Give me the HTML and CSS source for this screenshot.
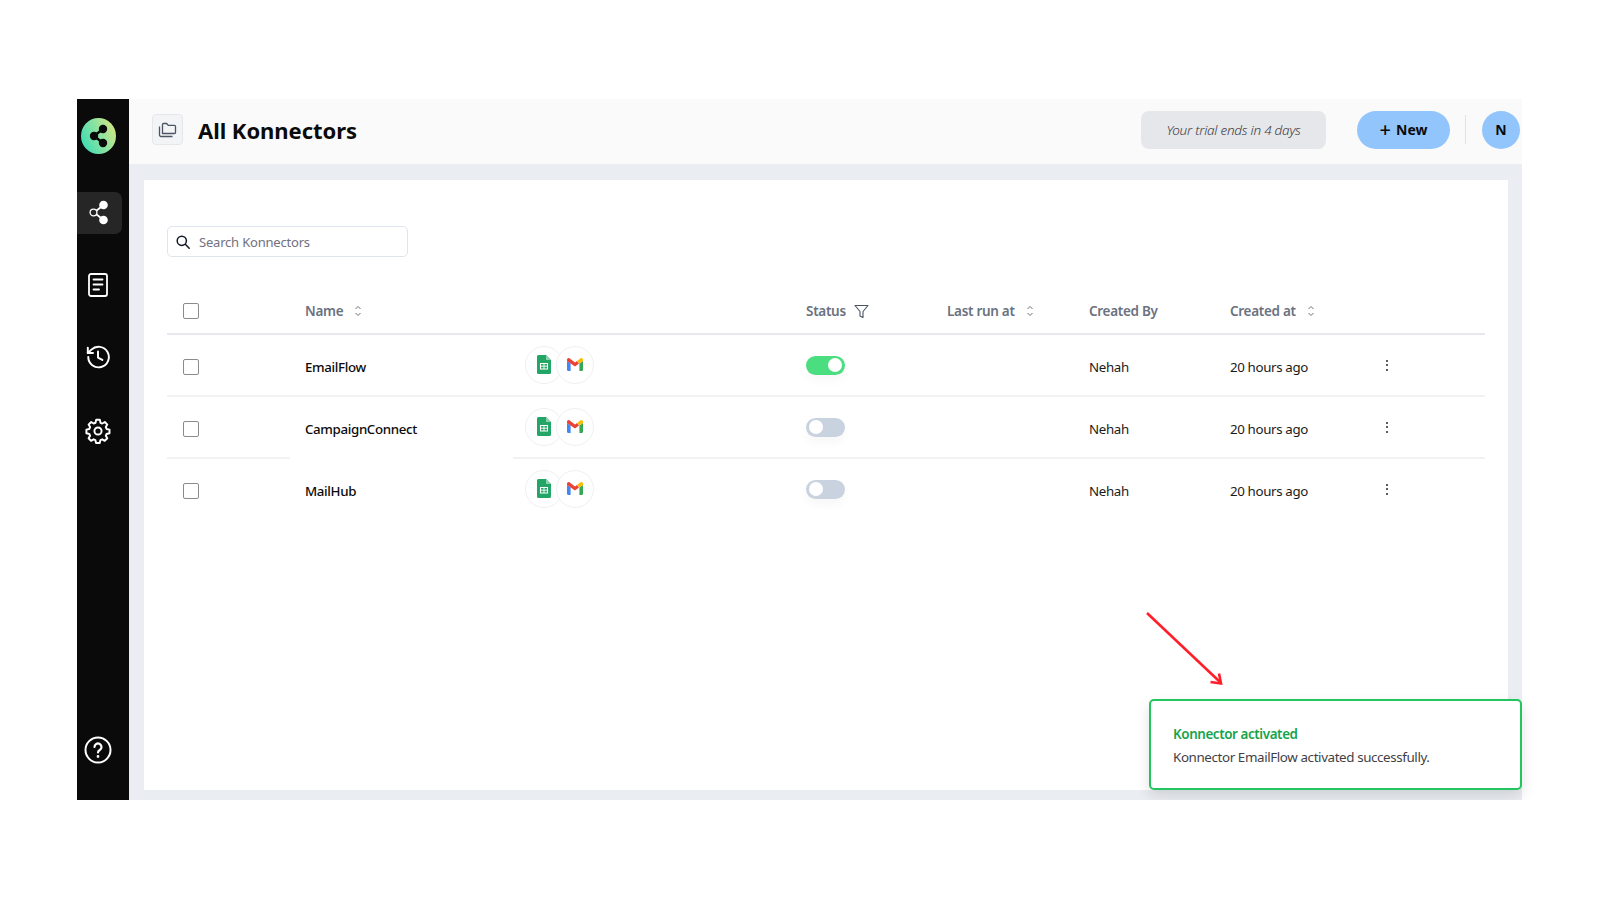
FILE: index.html
```html
<!DOCTYPE html>
<html lang="en">
<head>
<meta charset="utf-8">
<title>All Konnectors</title>
<link rel="stylesheet" href="styles.css">
</head>
<body>
<div class="app">
  <aside class="sidebar">
    <div class="logo">
      <svg width="20" height="24" viewBox="0 0 20 24"><path d="M14 5 5 12l9 7" fill="none" stroke="#0a0a0a" stroke-width="2.6"/><circle cx="14" cy="5" r="4.200" fill="#0a0a0a"/><circle cx="14" cy="19" r="4.200" fill="#0a0a0a"/><circle cx="5" cy="12" r="4.200" fill="#0a0a0a"/></svg>
    </div>
    <div class="nav-item active">
      <svg width="22" height="28" viewBox="0 0 22 28"><path d="M15 6.500 6 13.500l9 7" fill="none" stroke="#fff" stroke-width="1.800"/><circle cx="15.500" cy="6" r="4.300" fill="#fff"/><circle cx="15.500" cy="21" r="4.300" fill="#fff"/><circle cx="5.500" cy="13.500" r="3.400" fill="#262626" stroke="#fff" stroke-width="1.300"/></svg>
    </div>
    <div class="nav-item">
      <svg width="22" height="26" viewBox="0 0 22 26" fill="none" stroke="#fff" stroke-width="1.800" stroke-linecap="round"><rect x="2" y="2" width="18" height="22" rx="2"/><path d="M6.500 7.500h9M6.500 12.500h9M6.500 17.500h5.500"/></svg>
    </div>
    <div class="nav-item">
      <svg width="26" height="26" viewBox="0 0 24 24" fill="none" stroke="#fff" stroke-width="1.800" stroke-linecap="round" stroke-linejoin="round"><path d="M3 12a9.500 9.500 0 1 0 2.900-6.800L2.600 8.300"/><path d="M2.600 3.500v4.800h4.800"/><path d="M12 7v5.500l4 2.200"/></svg>
    </div>
    <div class="nav-item gear">
      <svg width="26" height="26" viewBox="0 0 24 24" fill="none" stroke="#fff" stroke-width="1.800" stroke-linecap="round" stroke-linejoin="round"><path d="M10.300 2.600h3.400l.6 2.700 1.600.7 2.400-1.400 2.300 2.400-1.400 2.300.7 1.700 2.700.6v3.400l-2.700.6-.7 1.700 1.400 2.300-2.400 2.400-2.300-1.400-1.700.7-.6 2.700h-3.400l-.6-2.700-1.600-.7-2.400 1.400-2.300-2.400 1.400-2.300-.7-1.700-2.700-.6v-3.400l2.700-.6.7-1.700-1.400-2.300 2.400-2.400 2.300 1.400 1.700-.7z" transform="translate(0 -.9)"/><circle cx="12" cy="12" r="3.300"/></svg>
    </div>
    <div class="nav-item help">
      <svg width="28" height="28" viewBox="0 0 28 28" fill="none" stroke="#fff" stroke-width="2" stroke-linecap="round"><circle cx="14" cy="14" r="12.500"/><path d="M10.500 11a3.500 3.500 0 1 1 5.300 3c-1.200.8-1.800 1.300-1.800 2.500" stroke-width="2.200"/><circle cx="14" cy="20.500" r=".6" stroke-width="1.600"/></svg>
    </div>
  </aside>
  <div class="content">
    <header class="topbar">
      <div class="folder-btn">
        <svg width="20" height="18" viewBox="0 0 20 18" fill="none" stroke="#4b5563" stroke-width="1.300" stroke-linejoin="round"><path d="M4.500 12.500V3.500a1 1 0 0 1 1-1h3.200l1.500 1.800h6.300a1 1 0 0 1 1 1v6.200a1 1 0 0 1-1 1h-11a1 1 0 0 1-1-1z"/><path d="M1.500 5.500v8.500a1.500 1.500 0 0 0 1.500 1.500h11.500"/></svg>
      </div>
      <h1 class="title">All Konnectors</h1>
      <div class="trial">Your trial ends in 4 days</div>
      <button class="new-btn"><span class="plus">+</span> New</button>
      <span class="vline"></span>
      <div class="avatar">N</div>
    </header>
    <main class="main">
      <section class="card">
        <div class="search">
          <svg width="14" height="14" viewBox="0 0 14 14" fill="none" stroke="#111827" stroke-width="1.500" stroke-linecap="round"><circle cx="5.800" cy="5.800" r="4.600"/><path d="m9.300 9.300 3.900 3.900"/></svg>
          <span>Search Konnectors</span>
        </div>
        <div class="table">
          <div class="row head">
            <span class="check"></span>
            <span class="th">Name <svg class="sort" width="8" height="12" viewBox="0 0 8 12" fill="none" stroke="#6b7280" stroke-width="1"><path d="m1.500 4 2.500-2.500L6.500 4M1.500 8 4 10.500 6.500 8"/></svg></span>
            <span></span>
            <span class="th">Status <svg class="funnel" width="15" height="15" viewBox="0 0 15 15" fill="none" stroke="#4b5563" stroke-width="1.100" stroke-linejoin="round"><path d="M1 1.500h13L9 7.500v6l-3-1.500V7.500z"/></svg></span>
            <span class="th">Last run at <svg class="sort" width="8" height="12" viewBox="0 0 8 12" fill="none" stroke="#6b7280" stroke-width="1"><path d="m1.500 4 2.500-2.500L6.500 4M1.500 8 4 10.500 6.500 8"/></svg></span>
            <span class="th">Created By</span>
            <span class="th">Created at <svg class="sort" width="8" height="12" viewBox="0 0 8 12" fill="none" stroke="#6b7280" stroke-width="1"><path d="m1.500 4 2.500-2.500L6.500 4M1.500 8 4 10.500 6.500 8"/></svg></span>
            <span></span>
          </div>
          <div class="sep strong"></div>
          <div class="row">
            <span class="check"></span>
            <span class="name">EmailFlow</span>
            <span class="apps">
              <span class="app-icon"><svg width="14" height="19" viewBox="0 0 14 19"><path d="M1.500 0H9l5 5v12.500a1.500 1.500 0 0 1-1.500 1.500h-11A1.500 1.500 0 0 1 0 17.500v-16A1.500 1.500 0 0 1 1.500 0z" fill="#23a566"/><path d="M9 0l5 5H9z" fill="#8ed1b1"/><path d="M3.500 8.500h7v5.500h-7z" fill="none" stroke="#fff" stroke-width="1.100"/><path d="M3.500 11.200h7M7 8.500V14" stroke="#fff" stroke-width=".9"/></svg></span>
              <span class="app-icon over"><svg width="16" height="13" viewBox="0 0 16 13"><path d="M0 3v8.800c0 .6.500 1.200 1.200 1.200H3.600V5.500z" fill="#4285f4"/><path d="M16 3v8.800c0 .6-.5 1.200-1.200 1.200h-2.400V5.500z" fill="#34a853"/><path d="M3.600 5.500 0 3V1.800C0 .4 1.600-.4 2.700.4L8 4.400l2-1.500 2 2.600L8 8.500z" fill="#ea4335"/><path d="M12.400 5.500 16 3V1.800c0-1.400-1.600-2.200-2.700-1.400L10 2.900z" fill="#fbbc04"/></svg></span>
            </span>
            <span class="toggle on"><span class="knob"></span></span>
            <span></span>
            <span class="cell">Nehah</span>
            <span class="cell">20 hours ago</span>
            <span class="dots"><i></i><i></i><i></i></span>
          </div>
          <div class="sep"></div>
          <div class="row">
            <span class="check"></span>
            <span class="name">CampaignConnect</span>
            <span class="apps">
              <span class="app-icon"><svg width="14" height="19" viewBox="0 0 14 19"><path d="M1.500 0H9l5 5v12.500a1.500 1.500 0 0 1-1.500 1.500h-11A1.500 1.500 0 0 1 0 17.500v-16A1.500 1.500 0 0 1 1.500 0z" fill="#23a566"/><path d="M9 0l5 5H9z" fill="#8ed1b1"/><path d="M3.500 8.500h7v5.500h-7z" fill="none" stroke="#fff" stroke-width="1.100"/><path d="M3.500 11.200h7M7 8.500V14" stroke="#fff" stroke-width=".9"/></svg></span>
              <span class="app-icon over"><svg width="16" height="13" viewBox="0 0 16 13"><path d="M0 3v8.800c0 .6.500 1.200 1.200 1.200H3.600V5.500z" fill="#4285f4"/><path d="M16 3v8.800c0 .6-.5 1.200-1.200 1.200h-2.400V5.500z" fill="#34a853"/><path d="M3.600 5.500 0 3V1.800C0 .4 1.600-.4 2.700.4L8 4.400l2-1.500 2 2.600L8 8.500z" fill="#ea4335"/><path d="M12.400 5.500 16 3V1.800c0-1.400-1.600-2.200-2.700-1.400L10 2.900z" fill="#fbbc04"/></svg></span>
            </span>
            <span class="toggle"><span class="knob"></span></span>
            <span></span>
            <span class="cell">Nehah</span>
            <span class="cell">20 hours ago</span>
            <span class="dots"><i></i><i></i><i></i></span>
          </div>
          <div class="sep split"></div>
          <div class="row">
            <span class="check"></span>
            <span class="name">MailHub</span>
            <span class="apps">
              <span class="app-icon"><svg width="14" height="19" viewBox="0 0 14 19"><path d="M1.500 0H9l5 5v12.500a1.500 1.500 0 0 1-1.500 1.500h-11A1.500 1.500 0 0 1 0 17.500v-16A1.500 1.500 0 0 1 1.500 0z" fill="#23a566"/><path d="M9 0l5 5H9z" fill="#8ed1b1"/><path d="M3.500 8.500h7v5.500h-7z" fill="none" stroke="#fff" stroke-width="1.100"/><path d="M3.500 11.200h7M7 8.500V14" stroke="#fff" stroke-width=".9"/></svg></span>
              <span class="app-icon over"><svg width="16" height="13" viewBox="0 0 16 13"><path d="M0 3v8.800c0 .6.500 1.200 1.200 1.200H3.600V5.500z" fill="#4285f4"/><path d="M16 3v8.800c0 .6-.5 1.200-1.200 1.200h-2.400V5.500z" fill="#34a853"/><path d="M3.600 5.500 0 3V1.800C0 .4 1.600-.4 2.700.4L8 4.400l2-1.500 2 2.600L8 8.500z" fill="#ea4335"/><path d="M12.400 5.500 16 3V1.800c0-1.400-1.600-2.200-2.700-1.400L10 2.900z" fill="#fbbc04"/></svg></span>
            </span>
            <span class="toggle"><span class="knob"></span></span>
            <span></span>
            <span class="cell">Nehah</span>
            <span class="cell">20 hours ago</span>
            <span class="dots"><i></i><i></i><i></i></span>
          </div>
        </div>
      </section>
    </main>
  </div>
  <svg class="arrow" width="80" height="76" viewBox="0 0 80 76" fill="none" stroke="#ff1f2a" stroke-width="2.600"><path d="M2 2 75 71"/><path d="M65.500 71 76 72.500l-2-10"/></svg>
  <div class="toast">
    <div class="toast-title">Konnector activated</div>
    <div class="toast-body">Konnector EmailFlow activated successfully.</div>
  </div>
</div>
</body>
</html>
```
FILE: styles.css
```css
* { box-sizing: border-box; }
html, body { margin: 0; padding: 0; background: #fff; }
body { font-family: "Noto Sans", "Open Sans", sans-serif; color: #111; padding: 99px 78px 0 77px; }

.app { position: relative; display: flex; height: 701px; width: 1445px; }

.sidebar { width: 52px; flex: none; background: #0a0a0a; display: flex; flex-direction: column; align-items: flex-start; padding-top: 19px; padding-bottom: 29px; }
.logo { width: 35px; height: 36px; margin-left: 4px; margin-bottom: 38px; border-radius: 50%; background: linear-gradient(65deg, #3fdcb4 10%, #8fe3a0 55%, #e3e67a 100%); display: flex; align-items: center; justify-content: center; }
.nav-item { width: 45px; height: 42px; margin-bottom: 30px; display: flex; align-items: center; justify-content: center; padding-right: 3px; }
.nav-item.active { background: #262626; border-radius: 0 7px 7px 0; padding-right: 2px; }
.nav-item.gear { padding-top: 4px; }
.nav-item.help { margin-top: auto; margin-bottom: 0; }

.content { flex: 1; min-width: 0; display: flex; flex-direction: column; }
.topbar { height: 65px; flex: none; background: #fafafa; display: flex; align-items: center; padding: 0 2px 4px 23px; }
.folder-btn { width: 31px; height: 31px; background: #f3f4f6; border: 1px solid #e5e7eb; border-radius: 4px; display: flex; align-items: center; justify-content: center; margin-right: 15px; }
.title { margin: 0; font-size: 22px; line-height: 30px; font-weight: 700; color: #0b0b0b; letter-spacing: -.05px; }
.trial { margin-left: auto; width: 185px; height: 38px; background: #e6e7ea; border-radius: 8px; display: flex; align-items: center; justify-content: center; font-size: 13.500px; font-style: italic; font-weight: 300; color: #3a3a44; letter-spacing: -.25px; }
.new-btn { margin-left: 31px; width: 93px; height: 38px; border: 0; border-radius: 19px; background: #93c5fd; font: 700 14px "Noto Sans", "Open Sans", sans-serif; color: #0b0b0b; display: flex; align-items: center; justify-content: center; gap: 5px; }
.plus { font-size: 20px; font-weight: 500; line-height: 20px; }
.vline { width: 1px; height: 29px; margin: 0 16px 0 15px; background: #e1e2e4; }
.avatar { width: 38px; height: 38px; border-radius: 50%; background: #93c5fd; display: flex; align-items: center; justify-content: center; font-size: 14px; font-weight: 700; color: #0b0b0b; }

.main { flex: 1; min-height: 0; background: #eaedf2; padding: 16px 14px 10px 15px; }
.card { height: 100%; background: #fff; padding: 46px 23px 0; }
.search { width: 241px; height: 31px; border: 1px solid #dfe5ee; border-radius: 5px; display: flex; align-items: center; gap: 9px; padding-left: 8px; font-size: 13px; color: #71717f; letter-spacing: -.2px; }

.table { margin-top: 30px; }
.row { display: grid; grid-template-columns: 138px 220px 281px 141px 142px 141px 142px 1fr; align-items: center; height: 60px; letter-spacing: -.35px; padding-top: 2px; }
.row.head { height: 46px; padding-top: 2px; letter-spacing: -.3px; }
.sep { height: 2px; background: #f1f2f4; }
.sep.strong { background: #e8e9ee; }
.sep.split { background: linear-gradient(to right, #f1f2f4 123px, transparent 123px, transparent 346px, #f1f2f4 346px); }

.check { width: 16px; height: 16px; margin-left: 16px; margin-top: 2px; border: 1.500px solid #8a8a8f; border-radius: 2px; background: #fff; }
.head .check { margin-top: 0; }
.th { font-size: 13.500px; font-weight: 600; color: #6b7280; display: flex; align-items: center; }
.sort { margin-left: 11px; }
.funnel { margin-left: 8px; }
.name { font-size: 13.300px; font-weight: 500; color: #0b0b0b; margin-top: 1px; }
.cell { font-size: 13.300px; color: #1a1a1a; margin-top: 1px; }

.apps { display: flex; margin: -2px 0 0 0; }
.app-icon { width: 38px; height: 38px; border: 1px solid #f0f0f2; border-radius: 50%; background: #fff; display: flex; align-items: center; justify-content: center; }
.app-icon svg { margin-top: -1px; }
.app-icon.over { margin-left: -7px; }

.toggle { width: 39px; height: 19px; margin-top: -2px; border-radius: 10px; background: #c9d3e0; display: flex; align-items: center; padding: 0 3px; box-shadow: 0 6px 10px rgba(0, 0, 0, .03); }
.toggle.on { background: #4ade80; justify-content: flex-end; }
.knob { width: 14px; height: 14px; border-radius: 50%; background: #fff; }

.dots { display: flex; flex-direction: column; gap: 2.500px; margin-left: 14px; margin-top: -2px; }
.dots i { width: 2px; height: 2px; border-radius: 50%; background: #27272a; }

.arrow { position: absolute; left: 1068px; top: 512px; }
.toast { position: absolute; left: 1072px; top: 600px; width: 373px; height: 91px; background: #fff; border: 2px solid #22c55e; border-radius: 5px; padding: 23px 0 0 22px; box-shadow: 0 6px 14px rgba(0, 0, 0, .12); letter-spacing: -.4px; }
.toast-title { font-size: 13.400px; line-height: 20px; font-weight: 600; color: #16a34a; }
.toast-body { font-size: 13.400px; line-height: 20px; margin-top: 3px; color: #3f3f46; }
```
